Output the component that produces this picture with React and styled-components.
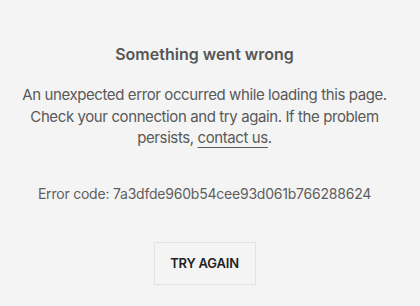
import styled, { createGlobalStyle } from 'styled-components'

const Global = createGlobalStyle`
  html, body {
    margin: 0;
    background: #f4f4f4;
  }
  body {
    font-family: Inter, "Noto Sans", sans-serif;
  }
`

const Page = styled.div`
  display: flex;
  flex-direction: column;
  align-items: center;
  text-align: center;
  padding: 42px 26px 0 15px;
  height: 306px;
  box-sizing: border-box;
`

const Title = styled.h1`
  margin: 0;
  font-size: 16px;
  font-weight: 600;
  color: #565656;
  line-height: 24px;
`

const Message = styled.p`
  margin: 18px 0 0;
  font-size: 15px;
  letter-spacing: -0.4px;
  line-height: 21.5px;
  color: #595959;
  max-width: 372px;
`

const ContactLink = styled.a`
  color: inherit;
  text-decoration: underline;
  text-decoration-thickness: 1px;
  text-underline-offset: 4px;
`

const Code = styled.p`
  margin: 35px 0 0;
  font-size: 14px;
  letter-spacing: -0.22px;
  line-height: 20px;
  color: #5e5e5e;
`

const RetryButton = styled.button`
  margin-top: 38px;
  width: 102px;
  height: 43px;
  background: transparent;
  border: 1px solid #e2e2e2;
  font-family: inherit;
  font-size: 13px;
  font-weight: 600;
  letter-spacing: -0.2px;
  color: #222;
  cursor: pointer;
`

export default function App () {
  return (
    <>
      <Global />
      <Page>
        <Title>Something went wrong</Title>
        <Message>
          An unexpected error occurred while loading this page. Check your
          connection and try again. If the problem persists,{' '}
          <ContactLink href='#'>contact us</ContactLink>.
        </Message>
        <Code>Error code: 7a3dfde960b54cee93d061b766288624</Code>
        <RetryButton>TRY AGAIN</RetryButton>
      </Page>
    </>
  )
}
